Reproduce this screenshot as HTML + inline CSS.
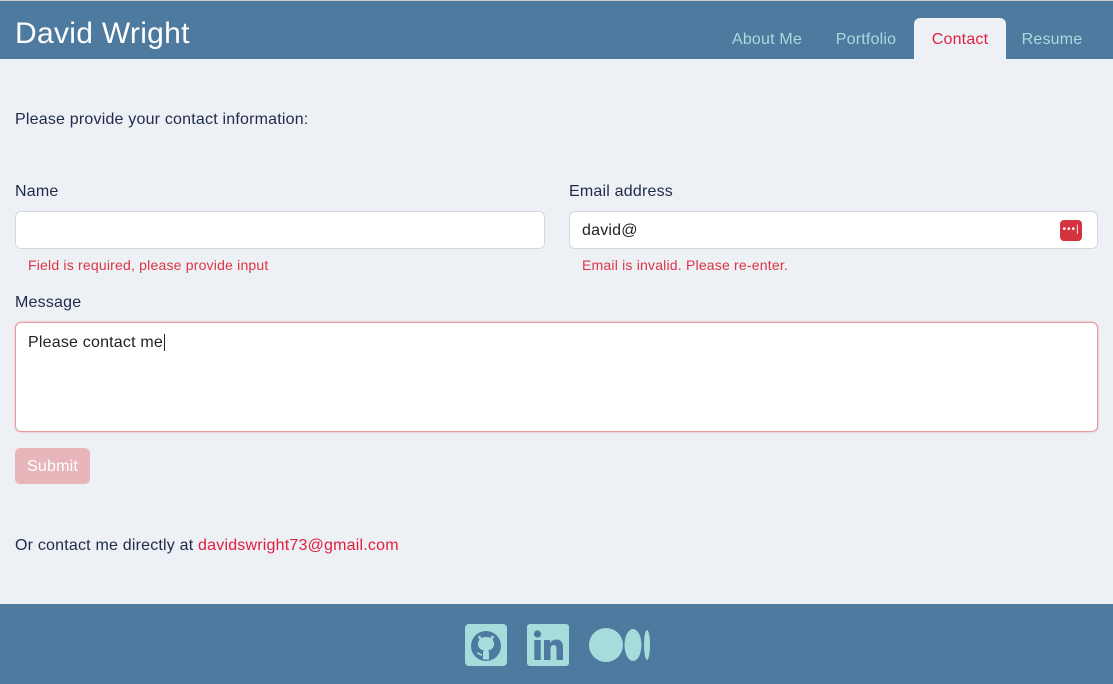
<!DOCTYPE html>
<html><head><meta charset="utf-8"><style>
*{box-sizing:border-box;margin:0;padding:0}
body{width:1113px;height:684px;background:#edf0f4;font-family:"Liberation Sans",sans-serif;color:#1e2b4a;position:relative;overflow:hidden;letter-spacing:0.2px}
.top{position:absolute;left:0;top:0;width:1113px;height:1px;background:#c8ccd2}
header{position:absolute;left:0;top:1px;width:1113px;height:58px;background:#4d7a9e}
header h1{position:absolute;left:15px;top:16px;font-size:30px;font-weight:normal;color:#fff;letter-spacing:0.3px}
.nav{position:absolute;top:17px;height:41px;font-size:16px;color:#a7dcdc;line-height:43px;text-align:center}
.nav.active{background:#edf0f4;color:#e0203e;border-radius:6px 6px 0 0}
.label{position:absolute;font-size:16px;color:#1e2b4a}
.input{position:absolute;background:#fff;border:1px solid #d4d8de;border-radius:6px}
.err{position:absolute;font-size:14px;color:#dc3545}
footer{position:absolute;left:0;top:604px;width:1113px;height:80px;background:#4d7a9e}
</style></head><body>
<div class="top"></div>
<header><h1>David Wright</h1>
<div class="nav" style="left:718px;width:98px">About Me</div>
<div class="nav" style="left:820px;width:92px">Portfolio</div>
<div class="nav active" style="left:914px;width:92px">Contact</div>
<div class="nav" style="left:1008px;width:88px">Resume</div>
</header>
<div class="label" style="left:15px;top:111px">Please provide your contact information:</div>
<div class="label" style="left:15px;top:183px">Name</div>
<div class="input" style="left:15px;top:211px;width:530px;height:38px"></div>
<div class="err" style="left:28px;top:257px">Field is required, please provide input</div>
<div class="label" style="left:569px;top:183px">Email address</div>
<div class="input" style="left:569px;top:211px;width:529px;height:38px"><span style="position:absolute;left:12px;top:10px;font-size:16px;color:#222">david@</span>
<div style="position:absolute;left:490px;top:8px;width:22px;height:21px;background:#d3343f;border-radius:4px;color:#fff;font-size:10px;line-height:20px;text-align:center;letter-spacing:1px">•••|</div></div>
<div class="err" style="left:582px;top:257px">Email is invalid. Please re-enter.</div>
<div class="label" style="left:15px;top:294px">Message</div>
<div class="input" style="left:15px;top:322px;width:1083px;height:110px;border-color:#e79aa0;box-shadow:0 0 2px #f0b0b4"><span style="position:absolute;left:12px;top:11px;font-size:16px;color:#222">Please contact me<span style="border-right:1px solid #222;margin-left:1px"></span></span></div>
<div style="position:absolute;left:15px;top:448px;width:75px;height:36px;background:#e8b6ba;border-radius:5px;color:#fff;font-size:16px;line-height:37px;text-align:center">Submit</div>
<div class="label" style="left:15px;top:537px">Or contact me directly at <span style="color:#e0203e">davidswright73@gmail.com</span></div>
<footer>
<svg style="position:absolute;left:465px;top:20px" width="42" height="42" viewBox="0 0 42 42"><rect width="42" height="42" rx="4" fill="#a7dcdc"/><circle cx="21" cy="22" r="15" fill="#4d7a9e"/><path d="M21 13c-5 0-8 3-8 7 0 4 3 6 6 6.5-1 .8-1 2-1 3v6h6v-6c0-1 0-2.2-1-3 3-.5 6-2.5 6-6.5 0-4-3-7-8-7z" fill="#a7dcdc"/><path d="M14 12l2 4 M28 12l-2 4" stroke="#a7dcdc" stroke-width="2.5"/><path d="M12 29c2 0 3 2 5 2" stroke="#a7dcdc" stroke-width="1.5" fill="none"/></svg>
<svg style="position:absolute;left:527px;top:20px" width="42" height="42" viewBox="0 0 42 42"><rect width="42" height="42" rx="3" fill="#a7dcdc"/><circle cx="10.5" cy="10" r="3.6" fill="#4d7a9e"/><rect x="7.3" y="16" width="6.4" height="20" fill="#4d7a9e"/><path d="M17 16h6v3c1.5-2.5 4-3.5 6.5-3.5 4.5 0 6.5 3 6.5 8V36h-6.5V25c0-2.5-1-4-3-4s-3 1.5-3 4V36H17z" fill="#4d7a9e"/></svg>
<svg style="position:absolute;left:589px;top:20px" width="62" height="42" viewBox="0 0 62 42"><ellipse cx="17" cy="21" rx="17" ry="17" fill="#a7dcdc"/><ellipse cx="44" cy="21" rx="8.5" ry="16" fill="#a7dcdc"/><ellipse cx="58" cy="21" rx="3" ry="15" fill="#a7dcdc"/></svg>
</footer>
</body></html>
